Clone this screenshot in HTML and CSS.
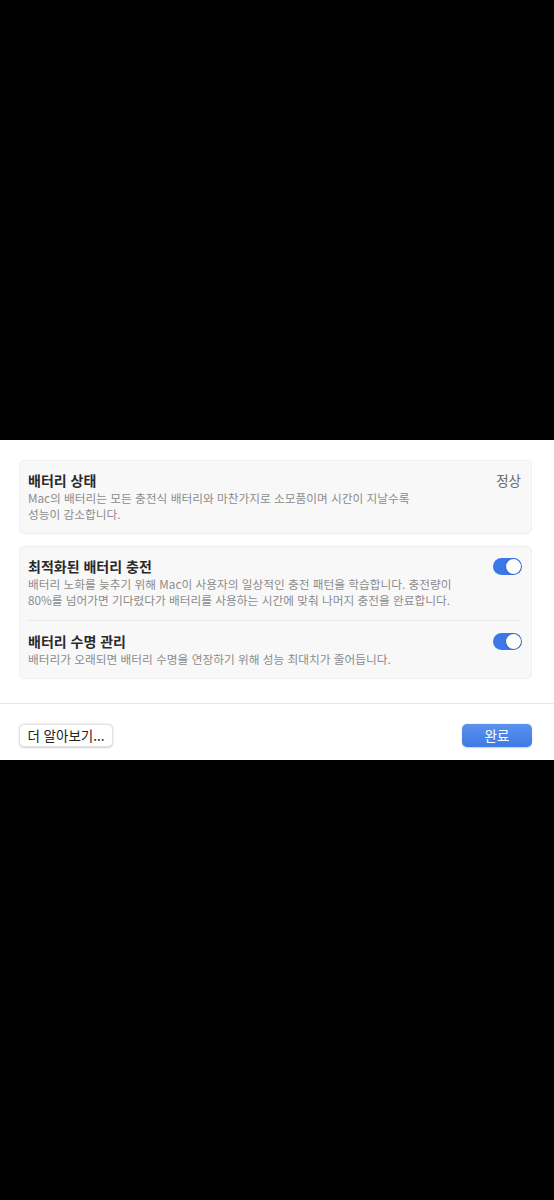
FILE: index.html
```html
<!DOCTYPE html>
<html lang="ko">
<head>
<meta charset="utf-8">
<title>배터리</title>
<link rel="stylesheet" href="styles.css">
</head>
<body>
<div class="screen">
  <div class="black-top"></div>
  <section class="sheet">
    <div class="content">
      <div class="card">
        <div class="row">
          <div class="row-head">
            <span class="title">배터리 상태</span>
            <span class="status">정상</span>
          </div>
          <p class="desc">Mac의 배터리는 모든 충전식 배터리와 마찬가지로 소모품이며 시간이 지날수록<br>성능이 감소합니다.</p>
        </div>
      </div>
      <div class="card">
        <div class="row">
          <div class="row-head">
            <span class="title">최적화된 배터리 충전</span>
            <span class="toggle"><span class="knob"></span></span>
          </div>
          <p class="desc">배터리 노화를 늦추기 위해 Mac이 사용자의 일상적인 충전 패턴을 학습합니다. 충전량이<br>80%를 넘어가면 기다렸다가 배터리를 사용하는 시간에 맞춰 나머지 충전을 완료합니다.</p>
        </div>
        <div class="divider"></div>
        <div class="row">
          <div class="row-head">
            <span class="title">배터리 수명 관리</span>
            <span class="toggle"><span class="knob"></span></span>
          </div>
          <p class="desc">배터리가 오래되면 배터리 수명을 연장하기 위해 성능 최대치가 줄어듭니다.</p>
        </div>
      </div>
    </div>
    <div class="footer">
      <button class="btn btn-secondary">더 알아보기...</button>
      <button class="btn btn-primary">완료</button>
    </div>
  </section>
</div>
</body>
</html>
```
FILE: styles.css
```css
* { box-sizing: border-box; }
html, body {
  margin: 0;
  padding: 0;
  background: #000;
}
body {
  font-family: "Noto Sans CJK KR", "Noto Sans", sans-serif;
  width: 554px;
  height: 1200px;
}
.screen {
  display: flex;
  flex-direction: column;
}
.black-top {
  height: 440px;
  background: #000;
}
.sheet {
  height: 320px;
  background: #fff;
  display: flex;
  flex-direction: column;
}
.content {
  padding: 20px 22px 0 19px;
  display: flex;
  flex-direction: column;
  gap: 12px;
}
.card {
  background: #f8f8f9;
  border: 1px solid #f0f0f1;
  border-radius: 5px;
}
.row {
  padding: 10px 9px 11px 8px;
}
.row-head {
  display: flex;
  align-items: center;
  justify-content: space-between;
  height: 18px;
}
.title {
  font-size: 14px;
  font-weight: 700;
  color: #2a2a2a;
  line-height: 18px;
}
.status {
  font-size: 13.5px;
  color: #6b6b6b;
  line-height: 18px;
  margin-right: 1px;
}
.desc {
  margin: 1px 0 0;
  font-size: 11.7px;
  line-height: 16px;
  color: #8c8c8c;
}
.divider {
  height: 1px;
  background: #e9e9ea;
  margin: 1px 10px 1px 8px;
}
.toggle {
  width: 29px;
  height: 17px;
  border-radius: 9px;
  background: #3b77e6;
  display: flex;
  align-items: center;
  justify-content: flex-end;
  padding: 1px;
}
.knob {
  width: 15px;
  height: 15px;
  border-radius: 50%;
  background: #fff;
  box-shadow: 0 0 0 0.5px rgba(0,0,0,0.25);
}
.footer {
  margin-top: 24px;
  border-top: 1px solid #e6e6e6;
  padding: 20px 22px 0 19px;
  display: flex;
  justify-content: space-between;
  align-items: center;
}
.btn {
  font-family: "Noto Sans CJK KR", "Noto Sans", sans-serif;
  font-size: 13.5px;
  height: 23px;
  line-height: 21px;
  border-radius: 5px;
  padding: 0;
  cursor: pointer;
}
.btn-secondary {
  width: 94px;
  background: #fff;
  color: #222;
  border: 0.5px solid #e2e2e2;
  box-shadow: 0 0.5px 2px rgba(0,0,0,0.18);
}
.btn-primary {
  width: 70px;
  background: linear-gradient(#5b92ef, #3e79e4);
  color: #fff;
  border: none;
  box-shadow: 0 0.5px 1.5px rgba(0,0,0,0.2);
}
```
